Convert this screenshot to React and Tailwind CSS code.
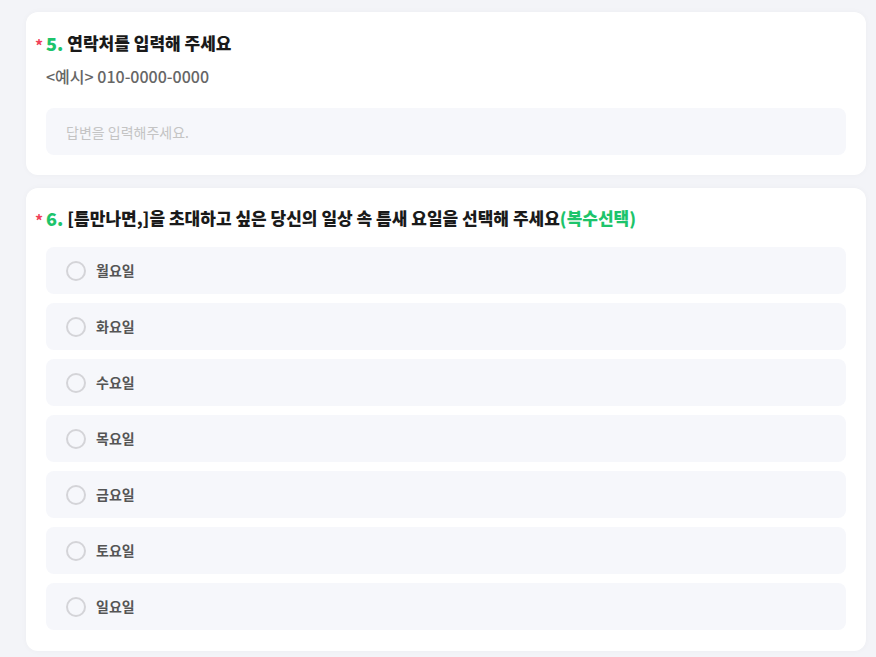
import React, { useState } from "react";

const days = ["월요일", "화요일", "수요일", "목요일", "금요일", "토요일", "일요일"];

function Title({ num, children }) {
  return (
    <h2 className="relative flex items-center text-[17px] font-extrabold leading-[24px] text-[#1a1a1a]">
      <span className="absolute -left-[11px] top-[2px] text-[16px] font-bold text-[#f0415a]">*</span>
      <span className="mr-[4px] text-[18px] text-[#1dc46b]">{num}.</span>
      {children}
    </h2>
  );
}

function App() {
  const [phone, setPhone] = useState("");
  const [selected, setSelected] = useState([]);

  const toggle = (d) =>
    setSelected((prev) => (prev.includes(d) ? prev.filter((x) => x !== d) : [...prev, d]));

  return (
    <div
      className="min-h-screen bg-[#f3f4f8] pl-[26px] pr-[10px] pt-[12px] pb-[6px]"
      style={{ fontFamily: "'Noto Sans CJK KR', 'Noto Sans', sans-serif" }}
    >
      <div className="flex flex-col gap-[13px]">
        <section className="rounded-[12px] bg-white px-[20px] pt-[19px] pb-[20px] shadow-[0_0_6px_rgba(0,0,0,0.03)]">
          <Title num="5">연락처를 입력해 주세요</Title>
          <p className="mt-[11px] text-[16px] font-medium leading-[20px] text-[#666]">&lt;예시&gt; 010-0000-0000</p>
          <input
            type="text"
            value={phone}
            onChange={(e) => setPhone(e.target.value)}
            placeholder="답변을 입력해주세요."
            className="mt-[22px] h-[47px] w-full rounded-[8px] bg-[#f6f7fb] px-[20px] text-[14px] text-[#333] placeholder:text-[#c4c4c4] focus:outline-none"
          />
        </section>

        <section className="rounded-[12px] bg-white px-[20px] pt-[18px] pb-[21px] shadow-[0_0_6px_rgba(0,0,0,0.03)]">
          <Title num="6">
            [틈만나면,]을 초대하고 싶은 당신의 일상 속 틈새 요일을 선택해 주세요
            <span className="text-[#1dc46b]">(복수선택)</span>
          </Title>
          <div className="mt-[17px] flex flex-col gap-[9px]">
            {days.map((d) => (
              <button
                key={d}
                type="button"
                onClick={() => toggle(d)}
                className="flex h-[47px] items-center rounded-[8px] bg-[#f6f7fb] px-[20px] text-left"
              >
                <span
                  className={`mr-[10px] h-[20px] w-[20px] rounded-full border-2 ${
                    selected.includes(d) ? "border-[#1dc46b] bg-[#1dc46b]" : "border-[#d4d4d8] bg-transparent"
                  }`}
                />
                <span className="text-[14px] font-bold text-[#555]">{d}</span>
              </button>
            ))}
          </div>
        </section>
      </div>
    </div>
  );
}

export default App;
